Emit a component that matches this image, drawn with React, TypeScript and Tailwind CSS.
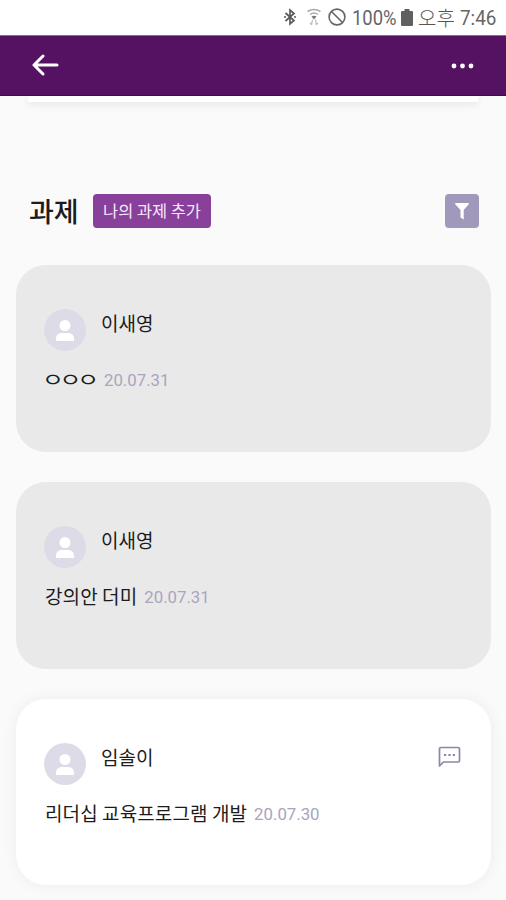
import React from 'react';

interface Task {
  id: number;
  author: string;
  title: string;
  date: string;
  active?: boolean;
  wide?: boolean;
}

const tasks: Task[] = [
  { id: 1, author: '이새영', title: 'ㅇㅇㅇ', date: '20.07.31', wide: true },
  { id: 2, author: '이새영', title: '강의안 더미', date: '20.07.31' },
  { id: 3, author: '임솔이', title: '리더십 교육프로그램 개발', date: '20.07.30', active: true },
];

const StatusBar: React.FC = () => (
  <div className="flex h-[35px] shrink-0 items-center bg-white pl-[284px] font-['Roboto','Noto_Sans_CJK_KR',sans-serif] text-[#666]">
    <svg className="-mt-px h-[18px] w-[12px] shrink-0" viewBox="0 0 12 18" fill="none" stroke="#5a5a5a" strokeWidth="1.700">
      <path d="M1.500 5 10 12.500 6 16V2l4 3.500L1.500 13" />
      <path d="M0 9h2M10 9h2" />
    </svg>
    <svg className="-mt-px ml-[11px] h-[18px] w-[14px] shrink-0" viewBox="0 0 14 18" fill="none" strokeWidth="1.5">
      <path d="M.5 3.500Q7-.5 13.500 3.500M3 6.500q4-3 8 0" stroke="#aaa" />
      <path d="M4.500 8.500q2.500-1.500 5 0L7 11.500z" fill="#777" stroke="none" />
      <path d="M5.500 11.500 4.500 17M3 15l1.500 1.500M8.500 11.500l1 5.500M11 15l-1.500 1.500" stroke="#bbb" strokeWidth="1.200" />
    </svg>
    <svg className="-mt-px ml-[7px] h-[18px] w-[18px] shrink-0" viewBox="0 0 18 18" fill="none" stroke="#666" strokeWidth="1.600">
      <circle cx="9" cy="9" r="7.900" />
      <path d="m3.500 3.500 11 11" />
    </svg>
    <span className="ml-[6px] w-[45px] shrink-0 origin-left scale-x-[0.9] whitespace-nowrap pt-px text-[20.500px]">100%</span>
    <svg className="ml-[4px] h-[17px] w-[12px] shrink-0" viewBox="0 0 12 17" fill="#606060">
      <path d="M3.500 0h5v2H11a1 1 0 0 1 1 1v13a1 1 0 0 1-1 1H1a1 1 0 0 1-1-1V3a1 1 0 0 1 1-1h2.500z" />
    </svg>
    <span className="ml-[5px] w-[37px] shrink-0 whitespace-nowrap pt-[2px] text-[20px] font-light leading-[28px] text-[#555]">오후</span>
    <span className="ml-[5px] origin-left scale-x-[0.92] whitespace-nowrap pt-px text-[20.500px]">7:46</span>
  </div>
);

const Header: React.FC = () => (
  <header className="relative z-10 flex h-[61px] shrink-0 items-center justify-between border-y border-t-[#8a6a90] border-b-[#400a50] bg-[#561262] pl-[32px] pr-[32px]">
    <button className="-mt-[2px]" aria-label="뒤로">
      <svg className="h-[22px] w-[27px]" viewBox="0 0 27 22" fill="none" stroke="white" strokeWidth="3" strokeLinecap="round" strokeLinejoin="round">
        <path d="M25 11H2M11 2 2 11l9 9" />
      </svg>
    </button>
    <button aria-label="더보기">
      <svg className="h-[6px] w-[23px]" viewBox="0 0 23 6" fill="white">
        <circle cx="3" cy="3" r="2.400" />
        <circle cx="11.500" cy="3" r="2.400" />
        <circle cx="20" cy="3" r="2.400" />
      </svg>
    </button>
  </header>
);

const Avatar: React.FC = () => (
  <svg className="h-[42px] w-[42px] shrink-0" viewBox="0 0 42 42">
    <circle cx="21" cy="21" r="21" fill="#dedbe8" />
    <circle cx="21" cy="16.500" r="5.500" fill="white" />
    <path d="M12 32v-2.500a5.500 5.500 0 0 1 5.500-5.500h7a5.500 5.500 0 0 1 5.500 5.500V32z" fill="white" />
  </svg>
);

const CommentIcon: React.FC = () => (
  <svg className="h-[22px] w-[23px]" viewBox="0 0 23 22" fill="none" stroke="#8c86ac" strokeWidth="1.700" strokeLinejoin="round">
    <path d="M1.500 20V3A1.500 1.500 0 0 1 3 1.500h17A1.500 1.500 0 0 1 21.500 3v11.500A1.500 1.500 0 0 1 20 16H5.500z" />
    <path d="M6 9h2.200M10.400 9h2.200M14.800 9H17" strokeWidth="2" />
  </svg>
);

const TaskCard: React.FC<{ task: Task }> = ({ task }) => (
  <article
    className={`h-[186.800px] shrink-0 rounded-[30px] pl-[28px] pr-[30px] pt-[44px] ${
      task.active ? 'bg-white shadow-[0_0_16px_rgba(0,0,0,0.06)]' : 'bg-[#e9e9e9]'
    }`}
  >
    <div className="flex items-start">
      <Avatar />
      <span className="ml-[15px] text-[19px] leading-[28px]">{task.author}</span>
      {task.active && (
        <button className="ml-auto mt-[3px]" aria-label="댓글">
          <CommentIcon />
        </button>
      )}
    </div>
    <div className="mt-[13px] flex items-center whitespace-nowrap leading-[28px]">
      {task.wide ? (
        <span className="-ml-[2px] mr-[2px] -mt-px w-[53px] origin-left scale-x-[1.25] text-[19px] tracking-[-3.400px]">{task.title}</span>
      ) : (
        <span className="pl-px text-[19px] tracking-[0.100px]">{task.title}</span>
      )}
      <span className="ml-[7px] mt-[2px] font-['Roboto',sans-serif] text-[16.800px] text-[#a9a5bd]">{task.date}</span>
    </div>
  </article>
);

const App: React.FC = () => {
  return (
    <div className="flex h-[900px] w-[506px] flex-col overflow-hidden bg-[#fafafa] font-['Noto_Sans_CJK_KR',sans-serif] text-[#1c1c1c]">
      <StatusBar />
      <Header />
      <div className="mx-[28px] h-[6px] shrink-0 bg-white shadow-[0_2px_8px_rgba(0,0,0,0.1)]" />
      <main className="mt-[92px] px-[16px] pr-[15px]">
        <div className="flex h-[34px] items-center pl-[13px] pr-[12px]">
          <h1 className="w-[51px] whitespace-nowrap text-[27px] font-medium leading-[34px]">과제</h1>
          <button className="ml-[13px] h-[34px] w-[118px] whitespace-nowrap rounded-[4px] bg-[#89409a] pb-[2px] text-[16.4px] leading-[32px] text-[#f8e8fc]">
            나의 과제 추가
          </button>
          <button className="ml-auto flex h-[34px] w-[34px] items-center justify-center rounded-[4px] bg-[#a099bb]" aria-label="필터">
            <svg className="h-[17px] w-[14px]" viewBox="0 0 14 17" fill="white">
              <path d="M.5 0h13q.8.500.2 1.300L8.700 7V16.500L5.500 14.500V7L.3 1.300Q-.3.500.5 0z" />
            </svg>
          </button>
        </div>
        <div className="mt-[37px] flex flex-col gap-[30px]">
          {tasks.map((task) => (
            <TaskCard key={task.id} task={task} />
          ))}
        </div>
      </main>
    </div>
  );
};

export default App;
